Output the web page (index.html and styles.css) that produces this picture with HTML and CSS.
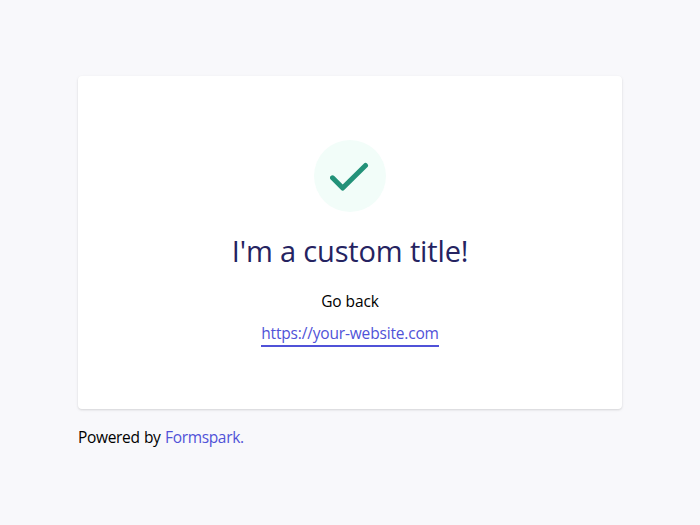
FILE: index.html
```html
<!DOCTYPE html>
<html lang="en">
<head>
<meta charset="utf-8">
<title>Form submitted</title>
<link rel="stylesheet" href="styles.css">
</head>
<body>
<main class="page">
  <section class="card">
    <div class="badge">
      <svg class="check" viewBox="0 0 40 32" aria-hidden="true"><path d="M2.5 17.8 12.7 28 35.5 5.5"/></svg>
    </div>
    <h1 class="title">I'm a custom title!</h1>
    <p class="back">Go back</p>
    <a class="link" href="#">https://your-website.com</a>
  </section>
  <footer class="footer">Powered by <a class="brand" href="#">Formspark.</a></footer>
</main>
</body>
</html>
```
FILE: styles.css
```css
* { box-sizing: border-box; }
body {
  margin: 0;
  background: #f8f8fb;
  color: #000;
  font: 15.5px/24px "Open Sans", "Noto Sans", sans-serif;
}
.page { width: 544px; margin: 0 auto; padding-top: 76px; }
.card {
  display: flex;
  flex-direction: column;
  align-items: center;
  height: 333px;
  padding-top: 64px;
  background: #fff;
  border-radius: 4px;
  box-shadow: 0 1px 3px rgba(0, 0, 0, .1), 0 1px 2px rgba(0, 0, 0, .06);
}
.badge {
  display: flex;
  align-items: center;
  justify-content: center;
  width: 72px;
  height: 72px;
  border-radius: 50%;
  background: #f2fdf9;
}
.check { width: 40px; height: 32px; fill: none; stroke: #239279; stroke-width: 5; stroke-linecap: round; stroke-linejoin: round; }
.title { margin: 16px 0; font-size: 29px; line-height: 45px; font-weight: 375; letter-spacing: -0.15px; color: #252361; }
.title { font-variation-settings: "wght" 370; }
.back { margin: 0 0 8px; letter-spacing: -0.1px; }
.link { color: #5052d8; text-decoration: none; letter-spacing: -0.17px; border-bottom: 2px solid #5052d8; }
.footer { padding-top: 16px; letter-spacing: -0.33px; word-spacing: 0.7px; }
.brand { color: #5052d8; text-decoration: none; }
```
